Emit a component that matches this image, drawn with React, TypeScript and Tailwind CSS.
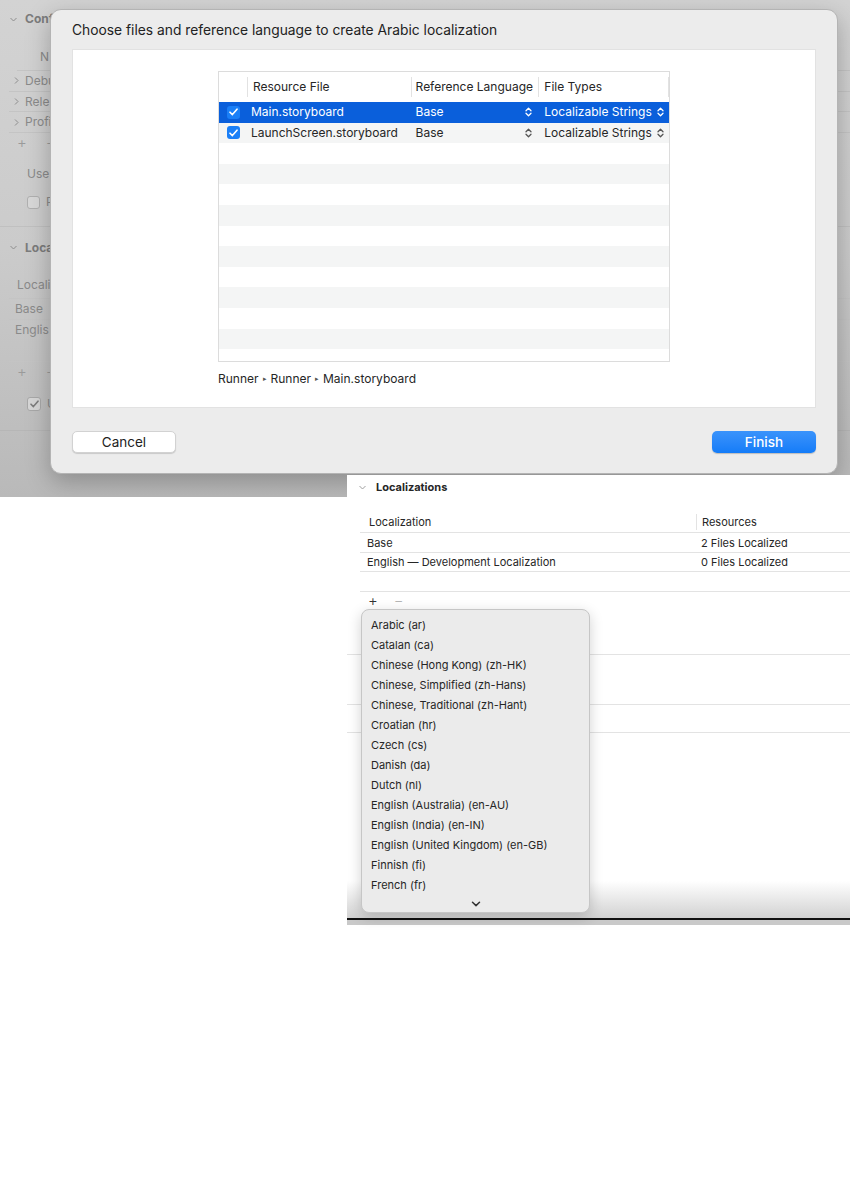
import React from "react";

const font = { fontFamily: "Inter, 'Noto Sans', sans-serif" };

const languages = [
  "Arabic (ar)",
  "Catalan (ca)",
  "Chinese (Hong Kong) (zh-HK)",
  "Chinese, Simplified (zh-Hans)",
  "Chinese, Traditional (zh-Hant)",
  "Croatian (hr)",
  "Czech (cs)",
  "Danish (da)",
  "Dutch (nl)",
  "English (Australia) (en-AU)",
  "English (India) (en-IN)",
  "English (United Kingdom) (en-GB)",
  "Finnish (fi)",
  "French (fr)",
];

const files = [
  { name: "Main.storyboard", selected: true },
  { name: "LaunchScreen.storyboard", selected: false },
];

function Stepper({ light }: { light?: boolean }) {
  return (
    <svg width="7" height="10" viewBox="0 0 7 10" fill="none" stroke={light ? "#fff" : "#555"} strokeWidth={1.3}>
      <path d="M1 3.8 3.5 1.3 6 3.8M1 6.2 3.5 8.7 6 6.2" strokeLinecap="round" strokeLinejoin="round" />
    </svg>
  );
}

function Check({ size = 13, dim }: { size?: number; dim?: boolean }) {
  return (
    <span
      className={`flex shrink-0 items-center justify-center rounded-[3px] ${
        dim ? "border border-[#a8a8a8] bg-[#d6d6d6]" : "bg-[#1a7ff7]"
      }`}
      style={{ width: size, height: size }}
    >
      <svg width="9" height="8" viewBox="0 0 9 8" fill="none" stroke={dim ? "#7d7d7d" : "#fff"} strokeWidth={1.6}>
        <path d="M1 4.2 3.4 6.6 8 1.2" strokeLinecap="round" strokeLinejoin="round" />
      </svg>
    </span>
  );
}

function Chevron({ open, color = "#8e8e8e" }: { open?: boolean; color?: string }) {
  return (
    <svg width="9" height="9" viewBox="0 0 9 9" fill="none" stroke={color} strokeWidth={1}>
      {open ? <path d="M1.5 3 4.5 6 7.5 3" /> : <path d="M3 1.5 6 4.5 3 7.5" />}
    </svg>
  );
}

// dimmed Xcode project panel behind the sheet: only the slivers the sheet leaves visible
function BackPanel() {
  const row = "flex h-[20.7px] items-center border-b border-[#c4c4c4]";
  return (
    <div className="flex flex-col text-[12px] text-[#8a8a8a]">
      <div className="flex h-[38px] items-center gap-[7px] pl-[9px] font-bold text-[#7c7c7c]">
        <Chevron open />
        <span>Conf</span>
      </div>
      <div className="ml-[17px] flex h-[33px] items-center border-b border-[#c4c4c4] pl-[23px] pt-[6px]">
        <span>N</span>
      </div>
      {["Debu", "Rele", "Profi"].map((n) => (
        <div key={n} className={`${row} ml-[9px] gap-[4px] pl-[3px]`}>
          <Chevron />
          <span>{n}</span>
        </div>
      ))}
      <div className="flex h-[20px] items-center gap-[19px] pl-[17px] text-[15px] font-light text-[#9a9a9a]">
        <span>+</span>
        <span>−</span>
      </div>
      <div className="flex h-[42px] items-center pl-[27px]">
        <span>Use</span>
      </div>
      <div className="flex h-[14px] items-center gap-[6px] pl-[27px]">
        <span className="h-[13px] w-[13px] rounded-[3px] border border-[#b0b0b0] bg-[#d8d8d8]" />
        <span>P</span>
      </div>
      <div className="mt-[17px] border-b border-[#c0c0c0]" />
      <div className="flex h-[41px] items-center gap-[7px] pl-[9px] font-bold text-[#7c7c7c]">
        <Chevron open />
        <span>Loca</span>
      </div>
      <div className="ml-[9px] flex h-[31px] items-center border-b border-[#c4c4c4] pl-[8px] pt-[3px]">
        <span>Locali</span>
      </div>
      <div className={`${row} ml-[9px] pl-[6px]`}>Base</div>
      <div className={`${row} ml-[9px] pl-[6px]`}>Englis</div>
      <div className="ml-[9px] h-[22px] border-b border-[#c4c4c4]" />
      <div className="flex h-[19px] items-center gap-[19px] pl-[17px] text-[15px] font-light text-[#9a9a9a]">
        <span>+</span>
        <span>−</span>
      </div>
      <div className="mt-[16px] flex h-[14px] items-center gap-[6px] pl-[27px]">
        <Check dim size={14} />
        <span>U</span>
      </div>
      <div className="mt-[19px] border-b border-[#b6b6b6]" />
    </div>
  );
}

function FileTable() {
  return (
    <div className="flex h-[291px] w-[452px] flex-col overflow-hidden border border-[#dcdcdc] bg-white text-[12px] text-[#262626]">
      <div className="flex h-[30px] shrink-0 items-center">
        <div className="w-[28px]" />
        <div className="h-[20px] border-l border-[#e2e2e2]" />
        <div className="w-[163px] pl-[5px]">Resource File</div>
        <div className="h-[20px] border-l border-[#e2e2e2]" />
        <div className="w-[127px] pl-[4px]">Reference Language</div>
        <div className="h-[20px] border-l border-[#e2e2e2]" />
        <div className="w-[129px] pl-[5px]">File Types</div>
        <div className="h-[20px] border-l border-[#e2e2e2]" />
      </div>
      {files.map((f) => (
        <div
          key={f.name}
          className={`flex h-[20.6px] shrink-0 items-center ${
            f.selected ? "bg-[#0a5fdb] text-white" : "bg-[#f4f5f5]"
          }`}
        >
          <div className="flex w-[29px] justify-center pl-[1px]">
            <Check />
          </div>
          <div className="w-[164px] pl-[3px]">{f.name}</div>
          <div className="flex w-[128px] items-center justify-between pl-[4px] pr-[7px]">
            <span>Base</span>
            <Stepper light={f.selected} />
          </div>
          <div className="flex w-[130px] items-center gap-[5px] pl-[5px]">
            <span>Localizable Strings</span>
            <Stepper light={f.selected} />
          </div>
        </div>
      ))}
      {Array.from({ length: 12 }).map((_, i) => (
        <div key={i} className={`h-[20.6px] shrink-0 ${i % 2 === 0 ? "bg-white" : "bg-[#f4f5f5]"}`} />
      ))}
    </div>
  );
}

function Sheet() {
  return (
    <div className="absolute left-[50px] top-[9px] flex h-[465px] w-[788px] flex-col rounded-[11px] border border-[#b4b4b4] bg-[#ececec] shadow-[0_8px_24px_rgba(0,0,0,0.25)]">
      <div className="flex h-[39px] items-center pl-[21px] pt-[1px] text-[13.8px] text-[#222]">
        Choose files and reference language to create Arabic localization
      </div>
      <div className="mx-[21px] flex h-[359px] flex-col border border-[#e2e2e2] bg-white pl-[145px] pt-[21px]">
        <FileTable />
        <div className="mt-[8px] flex items-center gap-[4px] text-[12px] text-[#262626]">
          <span>Runner</span>
          <span className="text-[7px] text-[#555]">▸</span>
          <span>Runner</span>
          <span className="text-[7px] text-[#555]">▸</span>
          <span>Main.storyboard</span>
        </div>
      </div>
      <div className="mt-[23px] flex justify-between px-[21px]">
        <button className="h-[22px] w-[104px] rounded-[5px] border border-[#d2d2d2] bg-white text-[13.5px] text-[#222] shadow-[0_1px_1px_rgba(0,0,0,0.15)]">
          Cancel
        </button>
        <button className="h-[22px] w-[104px] rounded-[5px] bg-gradient-to-b from-[#3a93fb] to-[#137cf8] text-[13.5px] font-medium text-white shadow-[0_1px_1px_rgba(0,0,0,0.2)]">
          Finish
        </button>
      </div>
    </div>
  );
}

function LanguageMenu() {
  return (
    <div className="absolute left-[14px] top-[134px] flex h-[304px] w-[229px] flex-col rounded-[8px] border border-[#c6c6c6] bg-[#ebebeb] pt-[5px] text-[11px] text-[#262626] shadow-[0_4px_14px_rgba(0,0,0,0.18)]">
      {languages.map((l) => (
        <div key={l} className="flex h-[20px] shrink-0 items-center pl-[9px]">
          {l}
        </div>
      ))}
      <div className="flex h-[17px] items-center justify-center">
        <svg width="10" height="6" viewBox="0 0 10 6" fill="none" stroke="#333" strokeWidth={1.5}>
          <path d="M1.5 1.2 5 4.6 8.5 1.2" strokeLinecap="round" strokeLinejoin="round" />
        </svg>
      </div>
    </div>
  );
}

function LocalizationsPanel() {
  return (
    <div className="relative z-10 -mt-[22px] ml-[347px] flex h-[450px] w-[503px] flex-col bg-white text-[11px] text-[#262626]">
      <div className="flex h-[24px] items-center gap-[9px] pl-[11px] font-bold">
        <Chevron open color="#a0a0a0" />
        <span>Localizations</span>
      </div>
      <div className="ml-[13px] mt-[10px] flex h-[24px] items-center border-b border-[#e3e3e3] pt-[3px]">
        <div className="w-[336px] pl-[9px]">Localization</div>
        <div className="h-[16px] border-l border-[#e3e3e3]" />
        <div className="pl-[5px]">Resources</div>
      </div>
      <div className="ml-[13px] flex h-[20px] items-center border-b border-[#e3e3e3] pt-[2px]">
        <div className="w-[337px] pl-[7px]">Base</div>
        <div className="pl-[4px]">2 Files Localized</div>
      </div>
      <div className="ml-[13px] flex h-[19px] items-center border-b border-[#e3e3e3] pt-[1px]">
        <div className="w-[337px] pl-[7px]">English — Development Localization</div>
        <div className="pl-[4px]">0 Files Localized</div>
      </div>
      <div className="ml-[13px] h-[20px] border-b border-[#e3e3e3]" />
      <div className="flex h-[18px] items-center gap-[16px] pl-[21px] text-[15px] font-light">
        <span className="text-[#333]">+</span>
        <span className="text-[#b5b5b5]">−</span>
      </div>
      <div className="h-[45px] border-b border-[#e3e3e3]" />
      <div className="h-[50px] border-b border-[#e3e3e3]" />
      <div className="h-[28px] border-b border-[#e3e3e3]" />
      <div className="flex-1 bg-gradient-to-b from-white from-[80%] to-[#d2d2d2]" />
      <div className="h-[2px] bg-[#111]" />
      <div className="h-[5px] bg-[#c9c9c9]" />
      <LanguageMenu />
    </div>
  );
}

export default function App() {
  return (
    <div className="h-[1203px] w-[850px] overflow-hidden bg-white" style={font}>
      <div className="relative h-[497px] overflow-hidden bg-gradient-to-b from-[#d3d3d3] via-[#cbcbcb] to-[#b9b9b9]">
        <BackPanel />
        <Sheet />
      </div>
      <LocalizationsPanel />
    </div>
  );
}
